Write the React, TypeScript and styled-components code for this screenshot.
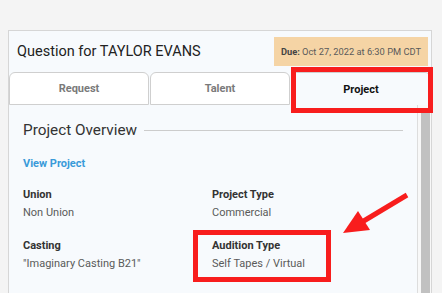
import styled, { createGlobalStyle } from "styled-components"

const COLORS = {
  page: "#f4f4f4",
  card: "#f7fafd",
  border: "#d6d6d6",
  tabBorder: "#cfcfcf",
  text: "#333333",
  muted: "#5a5a5a",
  tabText: "#7a7a7a",
  link: "#3a9ad9",
  badge: "#f5d4a5",
  red: "#f81d1d",
  thumb: "#c1c1c1",
}

const GlobalStyle = createGlobalStyle`
  html, body {
    margin: 0;
    background: ${COLORS.page};
    font-family: Roboto, "Liberation Sans", sans-serif;
    overflow: hidden;
  }
`

const Page = styled.main`
  padding: 30px 0 0 8px;
`

const Card = styled.section`
  position: relative;
  width: 424px;
  height: 263px;
  box-sizing: border-box;
  border: 1px solid ${COLORS.border};
  border-bottom: none;
  background: ${COLORS.card};
`

const Header = styled.header`
  display: flex;
  align-items: center;
  justify-content: space-between;
  padding: 6px 3px 6px 8px;
`

const Title = styled.h2`
  margin: 0;
  font-size: 14.5px;
  font-weight: 400;
  color: #222;
`

const Badge = styled.div`
  background: ${COLORS.badge};
  padding: 0 7px;
  line-height: 29px;
  font-size: 9.3px;
  color: ${COLORS.muted};

  b {
    color: #444;
  }
`

const Tabs = styled.nav`
  display: grid;
  grid-template-columns: repeat(3, 1fr);
  gap: 1px;
`

const Tab = styled.div<{ $active?: boolean; $marked?: boolean }>`
  position: relative;
  height: 33px;
  box-sizing: border-box;
  display: flex;
  align-items: center;
  justify-content: center;
  border: 1px solid ${COLORS.tabBorder};
  border-bottom: ${p => (p.$active ? "none" : `1px solid ${COLORS.tabBorder}`)};
  border-radius: 6px 6px 0 0;
  background: ${p => (p.$active ? COLORS.card : "#ffffff")};
  font-size: 11px;
  font-weight: 700;
  color: ${p => (p.$active ? "#111" : COLORS.tabText)};

  ${p =>
    p.$marked &&
    `
    &::after {
      content: "";
      position: absolute;
      z-index: 2;
      top: -6px;
      left: -1px;
      right: -3px;
      bottom: -8px;
      border: 5px solid ${COLORS.red};
    }
  `}
`

const Panel = styled.div`
  display: flex;
  height: 200px;
`

const Content = styled.div`
  flex: 1;
  padding: 15px 14px 0 14px;
`

const ScrollTrack = styled.div`
  width: 14px;
  border-left: 1px solid #dddddd;
  background: #f8f8f8;
  padding: 5px 0 0 3px;
  box-sizing: border-box;
`

const Thumb = styled.div`
  width: 9px;
  height: 100%;
  background: ${COLORS.thumb};
`

const SectionTitle = styled.div`
  display: flex;
  align-items: center;
  gap: 7px;
  font-size: 15.3px;
  line-height: 20px;
  color: ${COLORS.text};

  &::after {
    content: "";
    flex: 1;
    height: 1px;
    background: #cccccc;
  }
`

const ViewLink = styled.a`
  display: block;
  margin-top: 15px;
  font-size: 11px;
  line-height: 18px;
  font-weight: 700;
  color: ${COLORS.link};
  text-decoration: none;
`

const Fields = styled.div`
  display: grid;
  grid-template-columns: 189px 1fr;
  row-gap: 15px;
  margin-top: 13px;
`

const Field = styled.div<{ $marked?: boolean }>`
  position: relative;
  font-size: 11px;
  line-height: 18px;

  ${p =>
    p.$marked &&
    `
    &::after {
      content: "";
      position: absolute;
      top: -7px;
      left: -19px;
      width: 138px;
      height: 52px;
      box-sizing: border-box;
      border: 5px solid ${COLORS.red};
    }
  `}
`

const Label = styled.div`
  font-weight: 700;
  color: ${COLORS.text};
`

const Value = styled.div`
  color: ${COLORS.muted};
`

const Arrow = styled.svg`
  position: absolute;
  left: 331px;
  top: 159px;
`

const fields = [
  { label: "Union", value: "Non Union" },
  { label: "Project Type", value: "Commercial" },
  { label: "Casting", value: "\"Imaginary Casting B21\"" },
  { label: "Audition Type", value: "Self Tapes / Virtual", marked: true },
]

export default function App() {
  return (
    <Page>
      <GlobalStyle />
      <Card>
        <Header>
          <Title>Question for TAYLOR EVANS</Title>
          <Badge>
            <b>Due:</b> Oct 27, 2022 at 6:30 PM CDT
          </Badge>
        </Header>
        <Tabs>
          <Tab>Request</Tab>
          <Tab>Talent</Tab>
          <Tab $active $marked>Project</Tab>
        </Tabs>
        <Panel>
          <Content>
            <SectionTitle>Project Overview</SectionTitle>
            <ViewLink href="#">View Project</ViewLink>
            <Fields>
              {fields.map(f => (
                <Field key={f.label} $marked={f.marked}>
                  <Label>{f.label}</Label>
                  <Value>{f.value}</Value>
                </Field>
              ))}
            </Fields>
          </Content>
          <ScrollTrack>
            <Thumb />
          </ScrollTrack>
        </Panel>
        <Arrow width="72" height="48" viewBox="0 0 72 48">
          <line x1="67" y1="5" x2="22" y2="32" stroke={COLORS.red} strokeWidth="5" />
          <polygon points="3,43 18,21 30,40" fill={COLORS.red} />
        </Arrow>
      </Card>
    </Page>
  )
}
